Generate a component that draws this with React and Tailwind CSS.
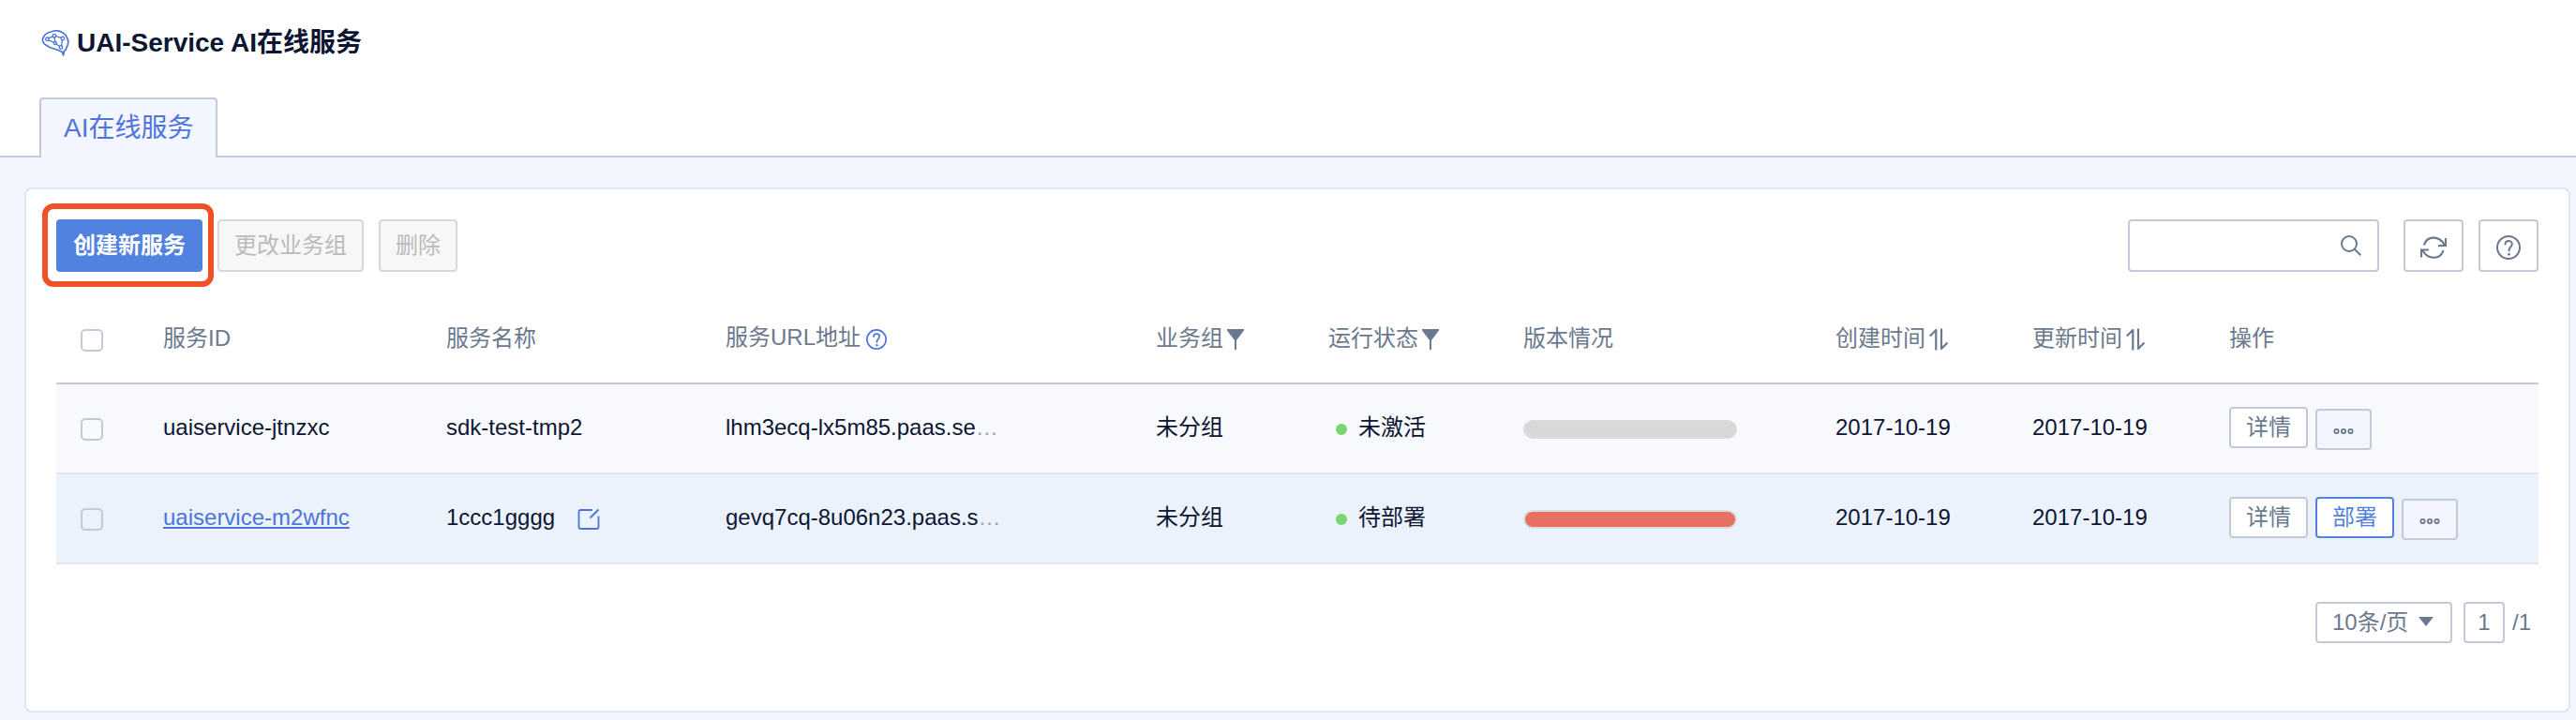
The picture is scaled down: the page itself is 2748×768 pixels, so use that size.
const BORDER = 'border-2 border-[#c4c9da]'

function BrainIcon() {
  return (
    <svg viewBox="0 0 30 28" className="h-7 w-[30px] shrink-0" fill="none" stroke="#4c74dc" strokeWidth="1.7" strokeLinejoin="round" strokeLinecap="round" aria-hidden="true">
      <path d="M23.500 27 L22.500 23.500 L18 21.500 L9 18.500 L5 16 C1.500 14 .5 10 2.500 7.500 C4 4 8 2.500 10.500 2 C14 .5 19 .6 22 2.500 C25.500 4 27 6.500 27.500 8.500 C29.500 12 29 15 27.500 17.500 C27 20.500 25 22 24.500 22.500 Z" />
      <path strokeWidth="1.300" d="M8 8.700 L12.400 6.900 M15.700 6.500 L21 8.300 M8 11 L13.500 13.200 M14.700 12.300 L14.200 8 M22.500 10.800 L21.500 16.700 M16 15 L19.600 17.500" />
      <circle cx="6.500" cy="9.800" r="1.800" strokeWidth="1.300" />
      <circle cx="14" cy="6.200" r="1.800" strokeWidth="1.300" />
      <circle cx="22.800" cy="9" r="1.800" strokeWidth="1.300" />
      <circle cx="14.800" cy="14" r="1.500" strokeWidth="1.300" />
      <circle cx="21" cy="18.500" r="1.800" strokeWidth="1.300" />
    </svg>
  )
}

function HelpIcon({ className }) {
  return (
    <svg viewBox="0 0 26 26" className={className} fill="none" stroke="currentColor" strokeWidth="2" strokeLinecap="round" aria-hidden="true">
      <circle cx="13" cy="13" r="12" />
      <path d="M9.500 9.500 C9.500 4.800 16.800 4.800 16.800 9.300 C16.800 12.300 13.500 12.300 13.500 16.500" />
      <circle cx="13.500" cy="20.300" r="1.400" fill="currentColor" stroke="none" />
    </svg>
  )
}

function RefreshIcon() {
  return (
    <svg viewBox="0 0 28 24" className="h-6 w-7" fill="none" stroke="currentColor" strokeWidth="2.200" aria-hidden="true">
      <path d="M4 9.500 C6.500 -.5 20 -1.500 25.500 9 M27 2 V10 H19" />
      <path d="M24.500 15 C21.500 25 8.500 25.500 2.500 15.500 M1 22.500 V14.500 H9" />
    </svg>
  )
}

function SearchIcon() {
  return (
    <svg viewBox="0 0 22 22" className="h-[22px] w-[22px]" fill="none" stroke="currentColor" strokeWidth="2" aria-hidden="true">
      <circle cx="9" cy="9" r="8" />
      <path d="M14.700 14.700 L21.300 21.300" />
    </svg>
  )
}

function FilterIcon() {
  return (
    <svg viewBox="0 0 18 22" className="h-[22px] w-[18px]" fill="currentColor" aria-hidden="true">
      <path d="M0 0 H18 V1.500 L10 12 V22 H8 V12 L0 1.500 Z" />
    </svg>
  )
}

function SortIcon() {
  return (
    <svg viewBox="0 0 20 24" className="h-6 w-5" fill="none" stroke="currentColor" strokeWidth="2.200" strokeLinejoin="round" aria-hidden="true">
      <path d="M.8 8.500 L7.300 2 V23.500 M13 .5 V22 L19.500 15.500" />
    </svg>
  )
}

function EditIcon() {
  return (
    <svg viewBox="0 0 24 24" className="h-6 w-6" fill="none" stroke="currentColor" strokeWidth="1.800" aria-hidden="true">
      <path d="M16 2 H3.500 Q1.500 2 1.500 4 V20 Q1.500 22 3.500 22 H20.500 Q22.500 22 22.500 20 V8.500 M13.500 10.500 L22.500 1.500" />
    </svg>
  )
}

function DotsIcon() {
  return (
    <svg viewBox="0 0 22 8" className="mt-1 h-2 w-[22px]" fill="none" stroke="currentColor" strokeWidth="1.800" aria-hidden="true">
      <circle cx="3.500" cy="4" r="2.200" />
      <circle cx="11" cy="4" r="2.200" />
      <circle cx="18.500" cy="4" r="2.200" />
    </svg>
  )
}

function Check({ label }) {
  return (
    <input type="checkbox" aria-label={label} className={'mt-1 block h-6 w-6 appearance-none rounded-[5px] bg-transparent ' + BORDER} />
  )
}

function SmallButton({ children, primary }) {
  return (
    <button
      type="button"
      className={
        'h-11 rounded border-2 bg-white px-4 leading-9 ' +
        (primary ? 'border-[#5282df] text-[#5282df]' : 'border-[#c4c9da] text-[#6b798e]')
      }
    >
      {children}
    </button>
  )
}

function HeadButton({ text, label, children }) {
  return (
    <span className="flex items-center gap-1">
      {text}
      <button type="button" aria-label={label} className="mt-0.5">
        {children}
      </button>
    </span>
  )
}

const rows = [
  { id: 'uaiservice-jtnzxc', name: 'sdk-test-tmp2', url: 'lhm3ecq-lx5m85.paas.se', status: '未激活', active: false },
  { id: 'uaiservice-m2wfnc', name: '1ccc1gggg', url: 'gevq7cq-8u06n23.paas.s', status: '待部署', active: true },
]

function Row({ row }) {
  return (
    <tr className={'h-24 [&>td]:border-b-2 [&>td]:border-[#e0e5ef] [&>td]:pb-0.5 ' + (row.active ? 'bg-[#ebf2fc]' : 'bg-[#f8f9fd]')}>
      <td className="pl-[26px]">
        <Check label={row.id} />
      </td>
      <td>
        {row.active ? (
          <a href="#detail" className="text-[#4c74dc] underline decoration-2 underline-offset-2">
            {row.id}
          </a>
        ) : (
          row.id
        )}
      </td>
      <td>
        <span className="flex items-center gap-6">
          {row.name}
          {row.active && (
            <button type="button" aria-label="修改名称" className="mt-1 text-[#4c74dc]">
              <EditIcon />
            </button>
          )}
        </span>
      </td>
      <td>
        {row.url}
        <span className="text-[#98a1b0]">…</span>
      </td>
      <td>未分组</td>
      <td>
        <span className="flex items-center gap-3 pl-2">
          <span className="mt-1 h-3 w-3 rounded-full bg-[#76d672]" />
          {row.status}
        </span>
      </td>
      <td>
        <div className={'mt-1 h-5 w-[228px] rounded-full border-2 border-[#d9dbde] ' + (row.active ? 'bg-[#e67162]' : 'bg-[#d8d8d8]')} />
      </td>
      <td>2017-10-19</td>
      <td>2017-10-19</td>
      <td>
        <div className="flex items-center gap-2">
          <SmallButton>详情</SmallButton>
          {row.active && <SmallButton primary>部署</SmallButton>}
          <button type="button" aria-label="更多" className={'mt-1 flex h-11 w-15 items-center justify-center rounded bg-[#f3f6fe] text-[#6b798e] ' + BORDER}>
            <DotsIcon />
          </button>
        </div>
      </td>
    </tr>
  )
}

export default function App() {
  return (
    <div className="min-h-screen bg-[#f3f6fe] pb-2 font-['Liberation_Sans','Noto_Sans_CJK_SC',sans-serif] text-2xl text-[#0c1633]">
      <header className="border-b-2 border-[#c4c9da] bg-white px-[42px] pt-[26px]">
        <h1 className="flex h-10 items-center gap-2 pl-0.5 text-[28px] font-bold">
          <BrainIcon />
          UAI-Service AI在线服务
        </h1>
        <nav className="mt-[38px] -mb-0.5 flex">
          <a href="#service" className="h-16 rounded-t border-2 border-b-0 border-[#c4c9da] bg-[#f3f6fe] px-6 text-[28px] leading-[62px] text-[#4c74dc]">
            AI在线服务
          </a>
        </nav>
      </header>

      <main className="mr-1.5 ml-[26px] mt-8 rounded-lg border-2 border-[#e0e5ef] bg-white px-8 pt-8 pb-[72px]">
        <div className="flex items-center justify-between">
          <div className="flex gap-4">
            <div className="relative">
              <button type="button" className="h-14 rounded bg-[#5282df] px-[18px] font-bold text-white">
                创建新服务
              </button>
              <div className="pointer-events-none absolute -top-[17px] -right-3 -bottom-4 -left-[15px] rounded-xl border-6 border-[#f05025]" />
            </div>
            <button type="button" disabled className="h-14 rounded border-2 border-[#d8d8d8] bg-[#f7f7f7] px-4 text-[#bbbbbb]">
              更改业务组
            </button>
            <button type="button" disabled className="h-14 rounded border-2 border-[#d8d8d8] bg-[#f7f7f7] px-4 text-[#bbbbbb]">
              删除
            </button>
          </div>
          <div className="flex gap-4 text-[#6b798e]">
            <label className={'mr-2.5 flex h-14 w-[268px] items-center rounded pr-[17px] pl-4 ' + BORDER}>
              <input type="text" aria-label="搜索" className="min-w-0 flex-1 outline-none" />
              <SearchIcon />
            </label>
            <button type="button" aria-label="刷新" className={'flex h-14 w-16 items-center justify-center rounded pt-1 ' + BORDER}>
              <RefreshIcon />
            </button>
            <button type="button" aria-label="帮助" className={'flex h-14 w-16 items-center justify-center rounded pt-1 ' + BORDER}>
              <HelpIcon className="h-[26px] w-[26px]" />
            </button>
          </div>
        </div>

        <table className="mt-6 w-full table-fixed border-separate border-spacing-0 text-left">
          <colgroup>
            <col className="w-[114px]" />
            <col className="w-[302px]" />
            <col className="w-[298px]" />
            <col className="w-[459px]" />
            <col className="w-[184px]" />
            <col className="w-[208px]" />
            <col className="w-[333px]" />
            <col className="w-[210px]" />
            <col className="w-[210px]" />
            <col className="w-[330px]" />
          </colgroup>
          <thead>
            <tr className="h-24 text-[#6b798e] [&>th]:border-b-2 [&>th]:border-[#c4c9da] [&>th]:font-normal">
              <th className="pl-[26px]">
                <Check label="全选" />
              </th>
              <th>服务ID</th>
              <th>服务名称</th>
              <th>
                <span className="flex items-center gap-1.5 pb-0.5">
                  服务URL地址
                  <button type="button" aria-label="说明" className="mt-1 text-[#4c74dc]">
                    <HelpIcon className="h-[22px] w-[22px]" />
                  </button>
                </span>
              </th>
              <th>
                <HeadButton text="业务组" label="筛选业务组">
                  <FilterIcon />
                </HeadButton>
              </th>
              <th>
                <HeadButton text="运行状态" label="筛选运行状态">
                  <FilterIcon />
                </HeadButton>
              </th>
              <th>版本情况</th>
              <th>
                <HeadButton text="创建时间" label="按创建时间排序">
                  <SortIcon />
                </HeadButton>
              </th>
              <th>
                <HeadButton text="更新时间" label="按更新时间排序">
                  <SortIcon />
                </HeadButton>
              </th>
              <th>操作</th>
            </tr>
          </thead>
          <tbody>
            {rows.map((row) => (
              <Row key={row.id} row={row} />
            ))}
          </tbody>
        </table>

        <div className="mt-10 flex items-center justify-end pr-2 text-[#6b798e]">
          <div className="relative">
            <select aria-label="每页条数" className={'block h-11 w-[146px] appearance-none rounded bg-white pl-4 ' + BORDER}>
              <option>10条/页</option>
            </select>
            <svg viewBox="0 0 16 10" className="pointer-events-none absolute top-4 right-5 h-2.5 w-4" fill="currentColor" aria-hidden="true">
              <path d="M0 0 H16 L8 10 Z" />
            </svg>
          </div>
          <input type="text" aria-label="页码" defaultValue="1" className={'ml-3 h-11 w-11 rounded text-center ' + BORDER} />
          <span className="ml-2">/1</span>
        </div>
      </main>
    </div>
  )
}
